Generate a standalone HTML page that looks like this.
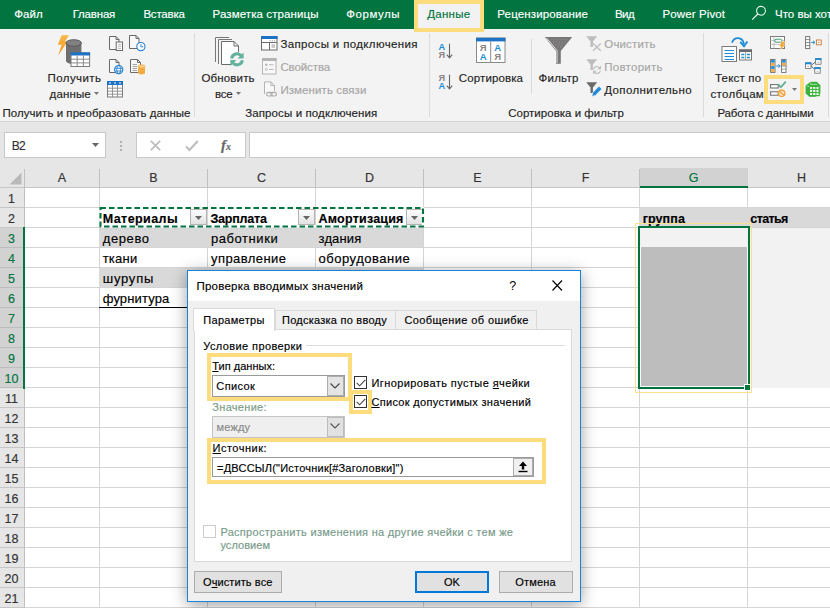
<!DOCTYPE html>
<html lang="ru"><head><meta charset="utf-8"><title>Проверка вводимых значений</title>
<style>
*{box-sizing:border-box;margin:0;padding:0}
html,body{width:830px;height:608px;overflow:hidden;background:#fff}
body{position:relative;font-family:"Liberation Sans","DejaVu Sans",sans-serif;font-size:12.5px;color:#262626}
.a{position:absolute}
.t{position:absolute;white-space:nowrap;line-height:16px;-webkit-text-stroke:0.16px currentColor}
svg{position:absolute;overflow:visible}
u{text-decoration:underline;text-underline-offset:1px}

</style></head><body>
<div class="a" style="left:0px;top:0px;width:830px;height:29px;background:#017440"></div>
<span class="t" style="left:14.30px;top:7px;line-height:14px;font-size:11.5px;color:#ffffff;letter-spacing:0.017px;">Файл</span>
<span class="t" style="left:72.70px;top:7px;line-height:14px;font-size:11.5px;color:#ffffff;letter-spacing:-0.192px;">Главная</span>
<span class="t" style="left:143.40px;top:7px;line-height:14px;font-size:11.5px;color:#ffffff;letter-spacing:-0.192px;">Вставка</span>
<span class="t" style="left:212.50px;top:7px;line-height:14px;font-size:11.5px;color:#ffffff;letter-spacing:0.109px;">Разметка страницы</span>
<span class="t" style="left:346.30px;top:7px;line-height:14px;font-size:11.5px;color:#ffffff;letter-spacing:0.525px;">Формулы</span>
<span class="t" style="left:497.30px;top:7px;line-height:14px;font-size:11.5px;color:#ffffff;letter-spacing:0.146px;">Рецензирование</span>
<span class="t" style="left:615.00px;top:7px;line-height:14px;font-size:11.5px;color:#ffffff;letter-spacing:-0.550px;">Вид</span>
<span class="t" style="left:662.50px;top:7px;line-height:14px;font-size:11.5px;color:#ffffff;letter-spacing:0.115px;">Power Pivot</span>
<span class="t" style="left:775.00px;top:7px;line-height:14px;font-size:11.5px;color:#ffffff;letter-spacing:0.000px;">Что вы хот</span>
<svg style="left:751px;top:5px" width="16" height="16" viewBox="0 0 16 16"><circle cx="10" cy="5.8" r="4.4" fill="none" stroke="#eef5f0" stroke-width="1.1"/><path d="M6.8 9 L1.2 14.6" stroke="#eef5f0" stroke-width="1.2" fill="none"/></svg>
<div class="a" style="left:0px;top:29px;width:830px;height:92px;background:#f3f3f3"></div>
<div class="a" style="left:0px;top:121px;width:830px;height:1px;background:#d2d2d2"></div>
<div class="a" style="left:414px;top:0px;width:70px;height:32px;background:#f2f2f2;border:4px solid #fddc7e"></div>
<span class="t" style="left:427.20px;top:7px;line-height:14px;font-size:11.5px;color:#017440;letter-spacing:0.290px;">Данные</span>
<div class="a" style="left:194px;top:33px;width:1px;height:84px;background:#dadada"></div>
<div class="a" style="left:429px;top:33px;width:1px;height:84px;background:#dadada"></div>
<div class="a" style="left:703px;top:33px;width:1px;height:84px;background:#dadada"></div>
<div class="a" style="left:828px;top:33px;width:1px;height:84px;background:#dadada"></div>
<div class="a" style="left:531px;top:39px;width:1px;height:55px;background:#dadada"></div>
<span class="t" style="left:47.60px;top:71px;line-height:14px;font-size:11.5px;color:#1f1f1f;letter-spacing:0.407px;">Получить</span>
<span class="t" style="left:49.60px;top:87px;line-height:14px;font-size:11.5px;color:#1f1f1f;letter-spacing:0.130px;">данные</span>
<span class="t" style="left:2.50px;top:106px;line-height:14px;font-size:11.5px;color:#1f1f1f;letter-spacing:0.047px;">Получить и преобразовать данные</span>
<span class="t" style="left:201.40px;top:71px;line-height:14px;font-size:11.5px;color:#1f1f1f;letter-spacing:0.164px;">Обновить</span>
<span class="t" style="left:215.00px;top:87px;line-height:14px;font-size:11.5px;color:#1f1f1f;letter-spacing:-0.225px;">все</span>
<span class="t" style="left:280.40px;top:37px;line-height:14px;font-size:11.5px;color:#1f1f1f;letter-spacing:0.360px;">Запросы и подключения</span>
<span class="t" style="left:280.40px;top:60px;line-height:14px;font-size:11.5px;color:#a6a6a6;letter-spacing:-0.100px;">Свойства</span>
<span class="t" style="left:280.40px;top:83px;line-height:14px;font-size:11.5px;color:#a6a6a6;letter-spacing:0.092px;">Изменить связи</span>
<span class="t" style="left:245.20px;top:106px;line-height:14px;font-size:11.5px;color:#1f1f1f;letter-spacing:0.110px;">Запросы и подключения</span>
<span class="t" style="left:458.80px;top:71px;line-height:14px;font-size:11.5px;color:#1f1f1f;letter-spacing:0.122px;">Сортировка</span>
<span class="t" style="left:538.50px;top:71px;line-height:14px;font-size:11.5px;color:#1f1f1f;letter-spacing:0.230px;">Фильтр</span>
<span class="t" style="left:604.30px;top:37px;line-height:14px;font-size:11.5px;color:#a6a6a6;letter-spacing:0.150px;">Очистить</span>
<span class="t" style="left:604.30px;top:60px;line-height:14px;font-size:11.5px;color:#a6a6a6;letter-spacing:0.256px;">Повторить</span>
<span class="t" style="left:604.30px;top:83px;line-height:14px;font-size:11.5px;color:#1f1f1f;letter-spacing:0.379px;">Дополнительно</span>
<span class="t" style="left:508.20px;top:106px;line-height:14px;font-size:11.5px;color:#1f1f1f;letter-spacing:0.017px;">Сортировка и фильтр</span>
<span class="t" style="left:715.00px;top:71px;line-height:14px;font-size:11.5px;color:#1f1f1f;letter-spacing:0.179px;">Текст по</span>
<span class="t" style="left:710.60px;top:87px;line-height:14px;font-size:11.5px;color:#1f1f1f;letter-spacing:0.271px;">столбцам</span>
<span class="t" style="left:717.40px;top:106px;line-height:14px;font-size:11.5px;color:#1f1f1f;letter-spacing:-0.153px;">Работа с данными</span>
<svg style="left:94px;top:92px" width="5" height="3" viewBox="0 0 5 3"><path d="M0 0H5L2.5 3Z" fill="#777"/></svg>
<svg style="left:236.3px;top:92px" width="5" height="3" viewBox="0 0 5 3"><path d="M0 0H5L2.5 3Z" fill="#777"/></svg>
<svg style="left:792px;top:88px" width="5" height="3" viewBox="0 0 5 3"><path d="M0 0H5L2.5 3Z" fill="#777"/></svg>
<div class="a" style="left:764px;top:75px;width:40px;height:29px;border:4px solid #fddc7e"></div>
<svg style="left:57px;top:34px" width="36" height="34" viewBox="0 0 36 34"><defs><linearGradient id="lg1" x1="0" y1="0" x2="0" y2="1"><stop offset="0" stop-color="#f8b84a"/><stop offset="1" stop-color="#f09a1e"/></linearGradient></defs><path d="M4.6 1.2H12L8 7.6H10.6L1.2 21.4L4.6 10.8H0.8Z" fill="url(#lg1)"/><path d="M9 9V26.5C9 28.5 12 30 16.5 30S24.4 28.5 24.4 26.5V9Z" fill="#6e6e6e"/><ellipse cx="16.7" cy="9" rx="7.7" ry="3.3" fill="#808080" stroke="#5a5a5a" stroke-width="1"/><rect x="14" y="19" width="18.6" height="13.5" fill="#fff" stroke="#7a7a7a" stroke-width="1"/><rect x="13.5" y="18.3" width="19.6" height="3.2" fill="#1e72c4"/><path d="M14 25.2H32.6M14 28.9H32.6M20.2 21.5V32.5M26.4 21.5V32.5" stroke="#8a8a8a" stroke-width="1" fill="none"/></svg>
<svg style="left:109px;top:36px" width="15" height="16" viewBox="0 0 15 16"><path d="M0.5 0.5H7L10 3.5V13.5H0.5Z" fill="#f8f8f8" stroke="#6a6a6a" stroke-width="1"/><path d="M7 0.5V3.5H10" fill="none" stroke="#6a6a6a" stroke-width="1"/><rect x="7.2" y="6" width="6.3" height="8.5" fill="#fff" stroke="#6a6a6a" stroke-width="1"/><path d="M9 8.4H12M9 10.4H12M9 12.4H12" stroke="#9a9a9a" stroke-width="0.7"/></svg>
<svg style="left:129px;top:35px" width="17" height="17" viewBox="0 0 17 17"><path d="M0.5 0.5H7L10 3.5V13.5H0.5Z" fill="#f8f8f8" stroke="#6a6a6a" stroke-width="1"/><path d="M7 0.5V3.5H10" fill="none" stroke="#6a6a6a" stroke-width="1"/><circle cx="11.9" cy="11.6" r="4.1" fill="#fff" stroke="#2580d0" stroke-width="1.1"/><path d="M11.9 9.2V11.8H14.2" stroke="#2580d0" stroke-width="1" fill="none"/></svg>
<svg style="left:109px;top:59px" width="16" height="17" viewBox="0 0 16 17"><path d="M0.5 0.5H7L10 3.5V13.5H0.5Z" fill="#f8f8f8" stroke="#6a6a6a" stroke-width="1"/><path d="M7 0.5V3.5H10" fill="none" stroke="#6a6a6a" stroke-width="1"/><circle cx="9.7" cy="10.6" r="4.1" fill="#fff" stroke="#2580d0" stroke-width="1.2"/><path d="M6.2 9.3H13.2M6.2 12H13.2" stroke="#2580d0" stroke-width="0.9" fill="none"/><ellipse cx="9.7" cy="10.6" rx="1.9" ry="4" fill="none" stroke="#2580d0" stroke-width="0.9"/></svg>
<svg style="left:130px;top:59px" width="16" height="17" viewBox="0 0 16 17"><path d="M0.5 0.5H7.5L10.5 3.5V13.5H0.5Z" fill="#f8f8f8" stroke="#6a6a6a" stroke-width="1"/><path d="M7.5 0.5V3.5H10.5" fill="none" stroke="#6a6a6a" stroke-width="1"/><path d="M2.6 5.5H7M2.6 7.5H7.4M2.6 9.5H7M2.6 11.5H7" stroke="#8a8a8a" stroke-width="0.8"/><path d="M8 7.4V13.8C8 14.8 9.5 15.5 11.5 15.5S15 14.8 15 13.8V7.4Z" fill="#f3ab45"/><ellipse cx="11.5" cy="7.4" rx="3.5" ry="1.7" fill="#f9cc85" stroke="#f0a235" stroke-width="0.6"/></svg>
<svg style="left:107px;top:81px" width="17" height="17" viewBox="0 0 17 17"><rect x="0.5" y="0.5" width="15" height="15.5" fill="#fff" stroke="#7a7a7a" stroke-width="1"/><rect x="0" y="0" width="16" height="4" fill="#1e72c4"/><path d="M2 2H4M7 2H9M12 2H14" stroke="#fff" stroke-width="1"/><path d="M0.5 7.2H15.5M0.5 10.2H15.5M0.5 13.2H15.5M5.5 4V16M10.5 4V16" stroke="#8a8a8a" stroke-width="0.9" fill="none"/></svg>
<svg style="left:214px;top:36px" width="32" height="32" viewBox="0 0 32 32"><path d="M1.5 26V1.5H15" fill="none" stroke="#777" stroke-width="1"/><path d="M4.5 28V3.5H18" fill="none" stroke="#777" stroke-width="1"/><path d="M7.5 5.5H20L24.5 10V28.5H7.5Z" fill="#fff" stroke="#6a6a6a" stroke-width="1"/><path d="M20 5.5V10H24.5" fill="none" stroke="#6a6a6a" stroke-width="1"/><circle cx="23" cy="23.3" r="7.6" fill="#f3f3f3"/><path d="M17.6 22.4A5.5 5.5 0 0 1 27.3 19.8" fill="none" stroke="#63b39c" stroke-width="3"/><path d="M29.6 16.6V22.6H23.6Z" fill="#63b39c"/><path d="M28.4 24.2A5.5 5.5 0 0 1 18.7 26.8" fill="none" stroke="#63b39c" stroke-width="3"/><path d="M16.4 30V24H22.4Z" fill="#63b39c"/></svg>
<svg style="left:261px;top:36px" width="17" height="15" viewBox="0 0 17 15"><rect x="0.5" y="0.5" width="15.5" height="13.5" fill="#fff" stroke="#6a6a6a" stroke-width="1"/><rect x="0" y="0" width="16.5" height="3" fill="#1e72c4"/><path d="M0.5 6.5H16M8.5 6.5V14" stroke="#6a6a6a" stroke-width="1" fill="none"/><path d="M10.5 9H14M10.5 11H14" stroke="#8a8a8a" stroke-width="0.9"/><path d="M8.6 4.8H9.6M10.8 4.8H11.8M13 4.8H14" stroke="#8a8a8a" stroke-width="0.9"/></svg>
<svg style="left:262px;top:58px" width="15" height="17" viewBox="0 0 15 17"><rect x="0.5" y="0.5" width="13.5" height="15.5" fill="#f8f8f8" stroke="#b4b4b4" stroke-width="1"/><rect x="0" y="0" width="14.5" height="3" fill="#b4b4b4"/><circle cx="4.3" cy="6.8" r="1.2" fill="#b4b4b4"/><circle cx="4.3" cy="11.4" r="1.1" fill="none" stroke="#b4b4b4" stroke-width="0.8"/><path d="M7 6.8H11.5M7 11.4H11.5" stroke="#b4b4b4" stroke-width="1"/></svg>
<svg style="left:264px;top:81px" width="15" height="17" viewBox="0 0 15 17"><path d="M0.5 13V0.9H6.8L10.5 4.6V10" fill="#f8f8f8" stroke="#b4b4b4" stroke-width="1"/><path d="M6.8 0.9V4.6H10.5" fill="none" stroke="#b4b4b4" stroke-width="1"/><rect x="2.6" y="11.4" width="5.6" height="3.6" rx="1.8" fill="none" stroke="#a8a8a8" stroke-width="1.1"/><rect x="6.8" y="11.4" width="5.6" height="3.6" rx="1.8" fill="none" stroke="#a8a8a8" stroke-width="1.1"/></svg>
<svg style="left:438px;top:43px" width="16" height="17" viewBox="0 0 16 17"><text x="0.4" y="6.8" font-family="Liberation Sans, sans-serif" font-size="9.2" font-weight="bold" fill="#1e8bd8">A</text><text x="0.4" y="15" font-family="Liberation Sans, sans-serif" font-size="9.2" font-weight="bold" fill="#8c8484">Я</text><path d="M11.5 0.8V14.6M8.8 11.6L11.5 14.8L14.2 11.6" fill="none" stroke="#666" stroke-width="1.1"/></svg>
<svg style="left:438px;top:74px" width="16" height="17" viewBox="0 0 16 17"><text x="0.4" y="6.8" font-family="Liberation Sans, sans-serif" font-size="9.2" font-weight="bold" fill="#8c8484">Я</text><text x="0.4" y="15" font-family="Liberation Sans, sans-serif" font-size="9.2" font-weight="bold" fill="#1e8bd8">A</text><path d="M11.5 0.8V14.6M8.8 11.6L11.5 14.8L14.2 11.6" fill="none" stroke="#666" stroke-width="1.1"/></svg>
<svg style="left:476px;top:37px" width="30" height="27" viewBox="0 0 30 27"><rect x="0.5" y="1" width="28.5" height="24.5" fill="#fff" stroke="#8a8a8a" stroke-width="1"/><rect x="0" y="0.8" width="29.5" height="3.6" fill="#1e72c4"/><path d="M14.7 4.4V25.5" stroke="#8a8a8a" stroke-width="1"/><text x="3.8" y="13.6" font-family="Liberation Sans, sans-serif" font-size="9.5" font-weight="bold" fill="#8c8484">Я</text><text x="3.8" y="23.2" font-family="Liberation Sans, sans-serif" font-size="9.5" font-weight="bold" fill="#1e8bd8">A</text><text x="18.3" y="13.6" font-family="Liberation Sans, sans-serif" font-size="9.5" font-weight="bold" fill="#1e8bd8">A</text><text x="18.3" y="23.2" font-family="Liberation Sans, sans-serif" font-size="9.5" font-weight="bold" fill="#8c8484">Я</text></svg>
<svg style="left:544px;top:36px" width="30" height="29" viewBox="0 0 30 29"><path d="M0.8 1H28.2L16.8 15V27.8H12V15Z" fill="#777"/><path d="M2.6 2L13 14.6V27" fill="none" stroke="#f3f3f3" stroke-width="0.9"/><g fill="#c9a9b0"><circle cx="8" cy="3.6" r="0.45"/><circle cx="11" cy="3.6" r="0.45"/><circle cx="14" cy="3.6" r="0.45"/><circle cx="17" cy="3.6" r="0.45"/><circle cx="20" cy="3.6" r="0.45"/><circle cx="23" cy="3.6" r="0.45"/><circle cx="9.5" cy="6" r="0.45"/><circle cx="12.5" cy="6" r="0.45"/><circle cx="15.5" cy="6" r="0.45"/><circle cx="18.5" cy="6" r="0.45"/><circle cx="21.5" cy="6" r="0.45"/><circle cx="12" cy="8.4" r="0.45"/><circle cx="15" cy="8.4" r="0.45"/><circle cx="18" cy="8.4" r="0.45"/><circle cx="14" cy="10.8" r="0.45"/><circle cx="16.5" cy="10.8" r="0.45"/></g></svg>
<svg style="left:586px;top:36px" width="16" height="16" viewBox="0 0 16 16"><path d="M0.2 0.3H11.2L6.9 5.6V11H4.5V5.6Z" fill="#bdbdbd"/><path d="M7 7.6L14.8 14.8M14.8 7.6L7 14.8" stroke="#bdbdbd" stroke-width="1.3" fill="none"/></svg>
<svg style="left:586px;top:58.5px" width="16" height="17" viewBox="0 0 16 17"><path d="M0.2 0.3H11.2L6.9 5.6V11H4.5V5.6Z" fill="#bdbdbd"/><path d="M7.6 10.4A3.4 3.4 0 0 1 13.6 8.8" fill="none" stroke="#bdbdbd" stroke-width="1.2"/><path d="M15 6.6V10.2H11.4Z" fill="#bdbdbd"/><path d="M14.4 11.6A3.4 3.4 0 0 1 8.4 13.2" fill="none" stroke="#bdbdbd" stroke-width="1.2"/><path d="M7 15.4V11.8H10.6Z" fill="#bdbdbd"/></svg>
<svg style="left:586px;top:81.5px" width="16" height="16" viewBox="0 0 16 16"><path d="M0.2 0.3H11.2L6.9 5.6V11H4.5V5.6Z" fill="#6a6a6a"/><path d="M13 4.2L15.8 7L9.4 13.4L5.8 14.6L6.8 10.6Z" fill="#1e8bd8" stroke="#f3f3f3" stroke-width="0.7"/></svg>
<svg style="left:721px;top:35px" width="33" height="28" viewBox="0 0 33 28"><rect x="1" y="11.5" width="14.5" height="15" fill="#fff" stroke="#7a7a7a" stroke-width="1"/><path d="M3.5 15.5H13M3.5 18.5H13M3.5 21.5H13M3.5 24.5H13" stroke="#1e8bd8" stroke-width="1"/><rect x="18.5" y="15" width="12" height="10" fill="#fff" stroke="#7a7a7a" stroke-width="1"/><rect x="18" y="14.4" width="13" height="2.6" fill="#6a6a6a"/><path d="M20.3 19.5H23.4M25.8 19.5H29M20.3 22.5H23.4M25.8 22.5H29" stroke="#1e8bd8" stroke-width="1.4"/><path d="M24.6 17V25" stroke="#8a8a8a" stroke-width="0.8"/><path d="M11 7.6C13 1.6 21.4 1 23 9" fill="none" stroke="#1e8bd8" stroke-width="1.8"/><path d="M19.2 6.8L23 11.2L26.4 6.4" fill="none" stroke="#1e8bd8" stroke-width="1.8"/></svg>
<svg style="left:770px;top:36px" width="17" height="16" viewBox="0 0 17 16"><rect x="0.5" y="0.5" width="14" height="12" fill="#fff" stroke="#7a7a7a" stroke-width="1"/><path d="M0.5 4.4H14.5M0.5 8.4H14.5M4 0.5V12.5" stroke="#b0b0b0" stroke-width="0.8"/><rect x="4.8" y="3.2" width="7" height="3" rx="1.2" fill="#fff" stroke="#3a9a6a" stroke-width="1"/><path d="M11.4 5.6H15.8L13.6 9H15.6L9.2 14.8L11.2 10.4H9.2Z" fill="#f4a938" stroke="#f3f3f3" stroke-width="0.4"/></svg>
<svg style="left:770px;top:58px" width="17" height="16" viewBox="0 0 17 16"><rect x="0.6" y="1.4" width="4.4" height="13" fill="#fff" stroke="#6a6a6a" stroke-width="0.9"/><rect x="1.1" y="1.9" width="3.4" height="2.8" fill="#1e8bd8"/><rect x="1.1" y="5" width="3.4" height="2.8" fill="#f3a93c"/><rect x="1.1" y="8.1" width="3.4" height="2.8" fill="#1e8bd8"/><rect x="1.1" y="11.2" width="3.4" height="2.7" fill="#f3a93c"/><rect x="11.6" y="1.4" width="4.4" height="13" fill="#fff" stroke="#6a6a6a" stroke-width="0.9"/><rect x="12.1" y="1.9" width="3.4" height="2.8" fill="#1e8bd8"/><rect x="12.1" y="5" width="3.4" height="2.8" fill="#f3a93c"/><path d="M11.6 8.1H16M11.6 11.2H16" stroke="#8a8a8a" stroke-width="0.8"/><path d="M6.2 8H9.8M8.4 6.4L10.2 8L8.4 9.6" fill="none" stroke="#1e8bd8" stroke-width="1"/></svg>
<svg style="left:769px;top:80px" width="18" height="18" viewBox="0 0 18 18"><rect x="1.6" y="4.6" width="7.6" height="3.4" fill="#fff" stroke="#6a6a6a" stroke-width="1"/><rect x="1.6" y="11.8" width="7.6" height="3.4" fill="#fff" stroke="#6a6a6a" stroke-width="1"/><path d="M9.2 4.4L11.8 7.2L16.8 1.6" fill="none" stroke="#5fae93" stroke-width="1.7"/><circle cx="12.7" cy="13.3" r="3.2" fill="#fbe6c6" stroke="#ee9a2c" stroke-width="1.2"/><path d="M10.5 11.2L14.9 15.4" stroke="#ee9a2c" stroke-width="1.2"/></svg>
<svg style="left:805px;top:36px" width="17" height="14" viewBox="0 0 17 14"><rect x="0.6" y="0.6" width="4.2" height="12" fill="#fff" stroke="#6a6a6a" stroke-width="0.9"/><path d="M0.6 3.6H4.8M0.6 6.6H4.8M0.6 9.6H4.8" stroke="#6a6a6a" stroke-width="0.8"/><path d="M6.2 6.4H9.6M8.2 4.8L10 6.4L8.2 8" fill="none" stroke="#1e8bd8" stroke-width="1"/><rect x="11.4" y="4" width="4.8" height="4.8" fill="#fff" stroke="#c8742c" stroke-width="0.9"/><rect x="13.2" y="5.8" width="1.2" height="1.2" fill="#c8742c"/></svg>
<svg style="left:805px;top:58px" width="17" height="17" viewBox="0 0 17 17"><path d="M5.8 7.6L10.6 3.8M5.8 7.6L10 11.8" stroke="#6a6a6a" stroke-width="1" fill="none"/><rect x="0.6" y="4.8" width="5.4" height="5.6" fill="#fff" stroke="#6a6a6a" stroke-width="0.8"/><rect x="0.19999999999999996" y="4.3999999999999995" width="6.2" height="1.9" fill="#1e8bd8"/><path d="M2.4 8.4H4.2" stroke="#8a8a8a" stroke-width="0.7"/><rect x="10.6" y="0.6" width="5.4" height="5.6" fill="#fff" stroke="#6a6a6a" stroke-width="0.8"/><rect x="10.2" y="0.19999999999999996" width="6.2" height="1.9" fill="#1e8bd8"/><path d="M12.4 4.2H14.2" stroke="#8a8a8a" stroke-width="0.7"/><rect x="9.8" y="9.6" width="5.4" height="5.6" fill="#fff" stroke="#6a6a6a" stroke-width="0.8"/><rect x="9.4" y="9.2" width="6.2" height="1.9" fill="#1e8bd8"/><path d="M11.600000000000001 13.2H13.4" stroke="#8a8a8a" stroke-width="0.7"/></svg>
<svg style="left:805px;top:81px" width="17" height="17" viewBox="0 0 17 17"><path d="M0.6 4.4L5.6 0.8H11.8L15.4 4.2V12.4L10.4 15.8H4.4L0.6 12.6Z" fill="#3bb23b"/><path d="M4.4 5.4H14.2V14.6H4.4Z" fill="#fff" opacity="0.92"/><path d="M4.4 8.4H14.2M4.4 11.5H14.2M7.6 5.4V14.6M10.9 5.4V14.6" stroke="#3bb23b" stroke-width="1"/><path d="M4.4 5.4H14.2V14.6H4.4Z" fill="none" stroke="#3bb23b" stroke-width="1.2"/><path d="M1.4 4.8L4.4 5.6M5.8 1.4V3.4H12" stroke="#c8ecc8" stroke-width="0.7" fill="none"/></svg>
<div class="a" style="left:0px;top:122px;width:830px;height:46px;background:#e6e6e6"></div>
<div class="a" style="left:4px;top:132px;width:102px;height:26px;background:#fff;border:1px solid #c8c8c8"></div>
<div class="a" style="left:136px;top:132px;width:110px;height:26px;background:#fff;border:1px solid #c8c8c8"></div>
<div class="a" style="left:249px;top:132px;width:590px;height:26px;background:#fff;border:1px solid #c8c8c8"></div>
<span class="t" style="left:11.80px;top:138px;line-height:16px;font-size:12px;color:#333;letter-spacing:-0.700px;">B2</span>
<svg style="left:92px;top:142.5px" width="7" height="4" viewBox="0 0 7 4"><path d="M0 0H7L3.5 4Z" fill="#666"/></svg>
<div class="a" style="left:120px;top:141px;width:2px;height:2px;background:#b0b0b0"></div>
<div class="a" style="left:120px;top:145px;width:2px;height:2px;background:#b0b0b0"></div>
<div class="a" style="left:120px;top:149px;width:2px;height:2px;background:#b0b0b0"></div>
<svg style="left:149.5px;top:140px" width="11" height="11" viewBox="0 0 11 11"><path d="M0.8 0.8L10.2 10.2M10.2 0.8L0.8 10.2" stroke="#bcbcbc" stroke-width="1.7" fill="none"/></svg>
<svg style="left:185px;top:140px" width="14" height="11" viewBox="0 0 14 11"><path d="M1 6.5L4.5 10L12.8 1" stroke="#bcbcbc" stroke-width="2" fill="none"/></svg>
<span class="t" style="left:221px;top:136px;font-family:'Liberation Serif',serif;font-style:italic;font-size:15px;line-height:18px;color:#666;font-weight:bold">f<span style="font-size:10px;font-weight:bold">x</span></span>
<div class="a" style="left:0px;top:168px;width:830px;height:20px;background:#e6e6e6"></div>
<div class="a" style="left:0px;top:168px;width:24px;height:440px;background:#e6e6e6"></div>
<div class="a" style="left:0px;top:228px;width:24px;height:160px;background:#d2d2d2"></div>
<div class="a" style="left:0px;top:187px;width:639px;height:1px;background:#c6c6c6"></div>
<div class="a" style="left:748px;top:187px;width:82px;height:1px;background:#c6c6c6"></div>
<div class="a" style="left:24px;top:207px;width:806px;height:1px;background:#d4d4d4"></div>
<div class="a" style="left:0px;top:207px;width:24px;height:1px;background:#c6c6c6"></div>
<div class="a" style="left:24px;top:227px;width:806px;height:1px;background:#d4d4d4"></div>
<div class="a" style="left:0px;top:227px;width:24px;height:1px;background:#c6c6c6"></div>
<div class="a" style="left:24px;top:247px;width:806px;height:1px;background:#d4d4d4"></div>
<div class="a" style="left:0px;top:247px;width:23px;height:1px;background:#bdbdbd"></div>
<div class="a" style="left:24px;top:267px;width:806px;height:1px;background:#d4d4d4"></div>
<div class="a" style="left:0px;top:267px;width:23px;height:1px;background:#bdbdbd"></div>
<div class="a" style="left:24px;top:287px;width:806px;height:1px;background:#d4d4d4"></div>
<div class="a" style="left:0px;top:287px;width:23px;height:1px;background:#bdbdbd"></div>
<div class="a" style="left:24px;top:307px;width:806px;height:1px;background:#d4d4d4"></div>
<div class="a" style="left:0px;top:307px;width:23px;height:1px;background:#bdbdbd"></div>
<div class="a" style="left:24px;top:327px;width:806px;height:1px;background:#d4d4d4"></div>
<div class="a" style="left:0px;top:327px;width:23px;height:1px;background:#bdbdbd"></div>
<div class="a" style="left:24px;top:347px;width:806px;height:1px;background:#d4d4d4"></div>
<div class="a" style="left:0px;top:347px;width:23px;height:1px;background:#bdbdbd"></div>
<div class="a" style="left:24px;top:367px;width:806px;height:1px;background:#d4d4d4"></div>
<div class="a" style="left:0px;top:367px;width:23px;height:1px;background:#bdbdbd"></div>
<div class="a" style="left:24px;top:387px;width:806px;height:1px;background:#d4d4d4"></div>
<div class="a" style="left:0px;top:387px;width:23px;height:1px;background:#bdbdbd"></div>
<div class="a" style="left:24px;top:407px;width:806px;height:1px;background:#d4d4d4"></div>
<div class="a" style="left:0px;top:407px;width:24px;height:1px;background:#c6c6c6"></div>
<div class="a" style="left:24px;top:427px;width:806px;height:1px;background:#d4d4d4"></div>
<div class="a" style="left:0px;top:427px;width:24px;height:1px;background:#c6c6c6"></div>
<div class="a" style="left:24px;top:447px;width:806px;height:1px;background:#d4d4d4"></div>
<div class="a" style="left:0px;top:447px;width:24px;height:1px;background:#c6c6c6"></div>
<div class="a" style="left:24px;top:467px;width:806px;height:1px;background:#d4d4d4"></div>
<div class="a" style="left:0px;top:467px;width:24px;height:1px;background:#c6c6c6"></div>
<div class="a" style="left:24px;top:487px;width:806px;height:1px;background:#d4d4d4"></div>
<div class="a" style="left:0px;top:487px;width:24px;height:1px;background:#c6c6c6"></div>
<div class="a" style="left:24px;top:507px;width:806px;height:1px;background:#d4d4d4"></div>
<div class="a" style="left:0px;top:507px;width:24px;height:1px;background:#c6c6c6"></div>
<div class="a" style="left:24px;top:527px;width:806px;height:1px;background:#d4d4d4"></div>
<div class="a" style="left:0px;top:527px;width:24px;height:1px;background:#c6c6c6"></div>
<div class="a" style="left:24px;top:547px;width:806px;height:1px;background:#d4d4d4"></div>
<div class="a" style="left:0px;top:547px;width:24px;height:1px;background:#c6c6c6"></div>
<div class="a" style="left:24px;top:567px;width:806px;height:1px;background:#d4d4d4"></div>
<div class="a" style="left:0px;top:567px;width:24px;height:1px;background:#c6c6c6"></div>
<div class="a" style="left:24px;top:587px;width:806px;height:1px;background:#d4d4d4"></div>
<div class="a" style="left:0px;top:587px;width:24px;height:1px;background:#c6c6c6"></div>
<div class="a" style="left:24px;top:607px;width:806px;height:1px;background:#d4d4d4"></div>
<div class="a" style="left:0px;top:607px;width:24px;height:1px;background:#c6c6c6"></div>
<div class="a" style="left:24px;top:188px;width:1px;height:420px;background:#c0c0c0"></div>
<div class="a" style="left:24px;top:169px;width:1px;height:19px;background:#c0c0c0"></div>
<div class="a" style="left:99px;top:188px;width:1px;height:420px;background:#d4d4d4"></div>
<div class="a" style="left:99px;top:169px;width:1px;height:19px;background:#c0c0c0"></div>
<div class="a" style="left:207px;top:188px;width:1px;height:420px;background:#d4d4d4"></div>
<div class="a" style="left:207px;top:169px;width:1px;height:19px;background:#c0c0c0"></div>
<div class="a" style="left:315px;top:188px;width:1px;height:420px;background:#d4d4d4"></div>
<div class="a" style="left:315px;top:169px;width:1px;height:19px;background:#c0c0c0"></div>
<div class="a" style="left:423px;top:188px;width:1px;height:420px;background:#d4d4d4"></div>
<div class="a" style="left:423px;top:169px;width:1px;height:19px;background:#c0c0c0"></div>
<div class="a" style="left:531px;top:188px;width:1px;height:420px;background:#d4d4d4"></div>
<div class="a" style="left:531px;top:169px;width:1px;height:19px;background:#c0c0c0"></div>
<div class="a" style="left:639px;top:188px;width:1px;height:420px;background:#d4d4d4"></div>
<div class="a" style="left:639px;top:169px;width:1px;height:19px;background:#c0c0c0"></div>
<div class="a" style="left:747px;top:188px;width:1px;height:420px;background:#d4d4d4"></div>
<div class="a" style="left:747px;top:169px;width:1px;height:19px;background:#c0c0c0"></div>
<div class="a" style="left:640px;top:168px;width:108px;height:20px;background:#d2d2d2"></div>
<div class="a" style="left:640px;top:186px;width:108px;height:2px;background:#017440"></div>
<div class="a" style="left:23px;top:227px;width:2px;height:162px;background:#017440"></div>
<svg style="left:9px;top:172px" width="13" height="13" viewBox="0 0 13 13"><path d="M12.5 0.5V12.5H0.5Z" fill="#b9b9b9"/></svg>
<span class="t" style="left:57.83px;top:170px;line-height:16px;font-size:12.5px;color:#333;letter-spacing:0.000px;">A</span>
<span class="t" style="left:149.32px;top:170px;line-height:16px;font-size:12.5px;color:#333;letter-spacing:0.000px;">B</span>
<span class="t" style="left:256.98px;top:170px;line-height:16px;font-size:12.5px;color:#333;letter-spacing:0.000px;">C</span>
<span class="t" style="left:364.98px;top:170px;line-height:16px;font-size:12.5px;color:#333;letter-spacing:0.000px;">D</span>
<span class="t" style="left:473.32px;top:170px;line-height:16px;font-size:12.5px;color:#333;letter-spacing:0.000px;">E</span>
<span class="t" style="left:581.67px;top:170px;line-height:16px;font-size:12.5px;color:#333;letter-spacing:0.000px;">F</span>
<span class="t" style="left:688.65px;top:170px;line-height:16px;font-size:12.5px;color:#017440;letter-spacing:0.000px;">G</span>
<span class="t" style="left:796.98px;top:170px;line-height:16px;font-size:12.5px;color:#333;letter-spacing:0.000px;">H</span>
<span class="t" style="left:8.03px;top:191px;line-height:16px;font-size:12.5px;color:#333;letter-spacing:0.000px;">1</span>
<span class="t" style="left:8.03px;top:211px;line-height:16px;font-size:12.5px;color:#333;letter-spacing:0.000px;">2</span>
<span class="t" style="left:8.03px;top:231px;line-height:16px;font-size:12.5px;color:#017440;letter-spacing:0.000px;">3</span>
<span class="t" style="left:8.03px;top:251px;line-height:16px;font-size:12.5px;color:#017440;letter-spacing:0.000px;">4</span>
<span class="t" style="left:8.03px;top:271px;line-height:16px;font-size:12.5px;color:#017440;letter-spacing:0.000px;">5</span>
<span class="t" style="left:8.03px;top:291px;line-height:16px;font-size:12.5px;color:#017440;letter-spacing:0.000px;">6</span>
<span class="t" style="left:8.03px;top:311px;line-height:16px;font-size:12.5px;color:#017440;letter-spacing:0.000px;">7</span>
<span class="t" style="left:8.03px;top:331px;line-height:16px;font-size:12.5px;color:#017440;letter-spacing:0.000px;">8</span>
<span class="t" style="left:8.03px;top:351px;line-height:16px;font-size:12.5px;color:#017440;letter-spacing:0.000px;">9</span>
<span class="t" style="left:4.55px;top:371px;line-height:16px;font-size:12.5px;color:#017440;letter-spacing:0.000px;">10</span>
<span class="t" style="left:5.00px;top:391px;line-height:16px;font-size:12.5px;color:#333;letter-spacing:0.000px;">11</span>
<span class="t" style="left:4.55px;top:411px;line-height:16px;font-size:12.5px;color:#333;letter-spacing:0.000px;">12</span>
<span class="t" style="left:4.55px;top:431px;line-height:16px;font-size:12.5px;color:#333;letter-spacing:0.000px;">13</span>
<span class="t" style="left:4.55px;top:451px;line-height:16px;font-size:12.5px;color:#333;letter-spacing:0.000px;">14</span>
<span class="t" style="left:4.55px;top:471px;line-height:16px;font-size:12.5px;color:#333;letter-spacing:0.000px;">15</span>
<span class="t" style="left:4.55px;top:491px;line-height:16px;font-size:12.5px;color:#333;letter-spacing:0.000px;">16</span>
<span class="t" style="left:4.55px;top:511px;line-height:16px;font-size:12.5px;color:#333;letter-spacing:0.000px;">17</span>
<span class="t" style="left:4.55px;top:531px;line-height:16px;font-size:12.5px;color:#333;letter-spacing:0.000px;">18</span>
<span class="t" style="left:4.55px;top:551px;line-height:16px;font-size:12.5px;color:#333;letter-spacing:0.000px;">19</span>
<span class="t" style="left:4.55px;top:571px;line-height:16px;font-size:12.5px;color:#333;letter-spacing:0.000px;">20</span>
<span class="t" style="left:4.55px;top:591px;line-height:16px;font-size:12.5px;color:#333;letter-spacing:0.000px;">21</span>
<div class="a" style="left:99px;top:228px;width:324px;height:19px;background:#d9d9d9"></div>
<div class="a" style="left:99px;top:268px;width:324px;height:19px;background:#d9d9d9"></div>
<div class="a" style="left:99px;top:307px;width:325px;height:1px;background:#000"></div>
<div class="a" style="left:639px;top:208px;width:191px;height:19px;background:#d9d9d9"></div>
<div class="a" style="left:748px;top:228px;width:82px;height:160px;background:#f2f2f2"></div>
<span class="t" style="left:102.70px;top:211px;line-height:16px;font-size:12.5px;color:#000;letter-spacing:0.437px;font-weight:bold;">Материалы</span>
<span class="t" style="left:210.50px;top:211px;line-height:16px;font-size:12.5px;color:#000;letter-spacing:-0.221px;font-weight:bold;">Зарплата</span>
<span class="t" style="left:318.60px;top:211px;line-height:16px;font-size:12.5px;color:#000;letter-spacing:0.210px;font-weight:bold;">Амортизация</span>
<span class="t" style="left:102.70px;top:230px;line-height:17px;font-size:13px;color:#000;letter-spacing:0.610px;">дерево</span>
<span class="t" style="left:211.00px;top:230px;line-height:17px;font-size:13px;color:#000;letter-spacing:0.562px;">работники</span>
<span class="t" style="left:318.60px;top:230px;line-height:17px;font-size:13px;color:#000;letter-spacing:0.130px;">здания</span>
<span class="t" style="left:102.70px;top:250px;line-height:17px;font-size:13px;color:#000;letter-spacing:0.225px;">ткани</span>
<span class="t" style="left:211.00px;top:250px;line-height:17px;font-size:13px;color:#000;letter-spacing:0.433px;">управление</span>
<span class="t" style="left:318.60px;top:250px;line-height:17px;font-size:13px;color:#000;letter-spacing:0.505px;">оборудование</span>
<span class="t" style="left:102.70px;top:270px;line-height:17px;font-size:13px;color:#000;letter-spacing:0.770px;">шурупы</span>
<span class="t" style="left:102.70px;top:290px;line-height:17px;font-size:13px;color:#000;letter-spacing:0.138px;">фурнитура</span>
<span class="t" style="left:642.70px;top:211px;line-height:16px;font-size:12.5px;color:#000;letter-spacing:0.100px;font-weight:bold;">группа</span>
<span class="t" style="left:750.30px;top:211px;line-height:16px;font-size:12.5px;color:#000;letter-spacing:-0.610px;font-weight:bold;">статья</span>
<div class="a" style="left:190px;top:209px;width:17px;height:16px;background:linear-gradient(#fdfdfd,#e2e2e2);border:1px solid #b4b4b4"></div>
<svg style="left:195px;top:216px" width="7" height="4" viewBox="0 0 7 4"><path d="M0 0H7L3.5 4Z" fill="#666"/></svg>
<div class="a" style="left:298px;top:209px;width:17px;height:16px;background:linear-gradient(#fdfdfd,#e2e2e2);border:1px solid #b4b4b4"></div>
<svg style="left:303px;top:216px" width="7" height="4" viewBox="0 0 7 4"><path d="M0 0H7L3.5 4Z" fill="#666"/></svg>
<div class="a" style="left:406px;top:209px;width:17px;height:16px;background:linear-gradient(#fdfdfd,#e2e2e2);border:1px solid #b4b4b4"></div>
<svg style="left:411px;top:216px" width="7" height="4" viewBox="0 0 7 4"><path d="M0 0H7L3.5 4Z" fill="#666"/></svg>
<svg style="left:98px;top:206px" width="328" height="23"><rect x="2.5" y="2" width="322.5" height="18.5" fill="none" stroke="#fff" stroke-width="2.1"/><rect x="2.5" y="2" width="322.5" height="18.5" fill="none" stroke="#017440" stroke-width="2.1" stroke-dasharray="5.5 3"/></svg>
<div class="a" style="left:635px;top:223px;width:117px;height:170px;border:1px solid #fde08c"></div>
<div class="a" style="left:640px;top:228px;width:108px;height:19px;background:#f2f2f2"></div>
<div class="a" style="left:640px;top:247px;width:108px;height:140px;background:#bdbdbd;border:1px solid #fff;border-top:0"></div>
<div class="a" style="left:638px;top:226px;width:112px;height:163px;border:2px solid #017440"></div>
<div class="a" style="left:744px;top:384px;width:7px;height:7px;background:#017440;border:1px solid #fff"></div>
<div class="a" style="left:187px;top:270px;width:394px;height:332px;background:#f0f0f0;border:1px solid #1883d7;box-shadow:0 3px 15px rgba(0,0,0,0.38)"></div>
<div class="a" style="left:188px;top:271px;width:392px;height:30px;background:#fff"></div>
<span class="t" style="left:196.40px;top:279px;line-height:14px;font-size:11.5px;color:#000;letter-spacing:0.238px;">Проверка вводимых значений</span>
<span class="t" style="left:509.30px;top:278px;line-height:16px;font-size:12.5px;color:#000;letter-spacing:0.000px;-webkit-text-stroke:0">?</span>
<svg style="left:552px;top:280px" width="11" height="11" viewBox="0 0 11 11"><path d="M0.5 0.5L10 10.5M10 0.5L0.5 10.5" stroke="#000" stroke-width="1.1" fill="none"/></svg>
<div class="a" style="left:275px;top:310px;width:121px;height:20px;background:#f0f0f0;border:1px solid #d9d9d9;border-bottom:0"></div>
<div class="a" style="left:395px;top:310px;width:142px;height:20px;background:#f0f0f0;border:1px solid #d9d9d9;border-bottom:0"></div>
<div class="a" style="left:194px;top:329px;width:378px;height:233px;background:#fff;border:1px solid #d9d9d9"></div>
<div class="a" style="left:193px;top:308px;width:82px;height:23px;background:#fff;border:1px solid #d9d9d9;border-bottom:0"></div>
<span class="t" style="left:203.30px;top:313px;line-height:14px;font-size:11px;color:#000;letter-spacing:0.294px;">Параметры</span>
<span class="t" style="left:282.00px;top:313px;line-height:14px;font-size:11px;color:#000;letter-spacing:0.247px;">Подсказка по вводу</span>
<span class="t" style="left:404.40px;top:313px;line-height:14px;font-size:11px;color:#000;letter-spacing:0.397px;">Сообщение об ошибке</span>
<div class="a" style="left:306px;top:345px;width:259px;height:1px;background:#dcdcdc"></div>
<span class="t" style="left:203.30px;top:339px;line-height:14px;font-size:11px;color:#000;letter-spacing:0.400px;">Условие проверки</span>
<div class="a" style="left:207px;top:353px;width:145px;height:48px;border:4px solid #fddc7e"></div>
<span class="t" style="left:212.30px;top:359px;line-height:14px;font-size:11px;color:#000;letter-spacing:0.015px;"><u>Т</u>ип данных:</span>
<div class="a" style="left:212px;top:375px;width:133px;height:22px;background:#fff;border:1px solid #9a9a9a"></div>
<div class="a" style="left:327px;top:376px;width:17px;height:20px;background:#e4e4e4;border:1px solid #adadad"></div>
<svg style="left:330px;top:383px" width="10" height="6" viewBox="0 0 10 6"><path d="M0.5 0.5L5 5L9.5 0.5" stroke="#444" stroke-width="1.1" fill="none"/></svg>
<span class="t" style="left:216.30px;top:379px;line-height:14px;font-size:11px;color:#000;letter-spacing:0.400px;">Список</span>
<div class="a" style="left:349px;top:390px;width:23px;height:24px;border:4px solid #fddc7e"></div>
<div class="a" style="left:354px;top:376px;width:13px;height:13px;background:#fff;border:1px solid #333"></div><svg style="left:356px;top:379px" width="10" height="8" viewBox="0 0 10 8"><path d="M0.7 3.8L3.6 6.8L9.3 0.8" stroke="#444" stroke-width="1.1" fill="none"/></svg>
<div class="a" style="left:354px;top:395px;width:13px;height:13px;background:#fff;border:1px solid #333"></div><svg style="left:356px;top:398px" width="10" height="8" viewBox="0 0 10 8"><path d="M0.7 3.8L3.6 6.8L9.3 0.8" stroke="#444" stroke-width="1.1" fill="none"/></svg>
<span class="t" style="left:371.40px;top:376px;line-height:14px;font-size:11px;color:#000;letter-spacing:0.416px;">Игнорировать пустые <u>я</u>чейки</span>
<span class="t" style="left:371.40px;top:395px;line-height:14px;font-size:11px;color:#000;letter-spacing:0.326px;"><u>С</u>писок допустимых значений</span>
<span class="t" style="left:212.30px;top:400px;line-height:14px;font-size:11px;color:#7a9a86;letter-spacing:0.306px;">Значение:</span>
<div class="a" style="left:212px;top:416px;width:133px;height:22px;background:#efefef;border:1px solid #c4c4c4"></div>
<div class="a" style="left:327px;top:417px;width:17px;height:20px;background:#e1e1e1;border:1px solid #bcbcbc"></div>
<svg style="left:330px;top:423px" width="10" height="6" viewBox="0 0 10 6"><path d="M0.5 0.5L5 5L9.5 0.5" stroke="#555" stroke-width="1.1" fill="none"/></svg>
<span class="t" style="left:216.60px;top:420px;line-height:14px;font-size:11px;color:#8a8a8a;letter-spacing:0.138px;">между</span>
<div class="a" style="left:207px;top:438px;width:339px;height:46px;border:4px solid #fddc7e"></div>
<span class="t" style="left:212.50px;top:441px;line-height:14px;font-size:11px;color:#000;letter-spacing:0.513px;"><u>И</u>сточник:</span>
<div class="a" style="left:212px;top:457px;width:322px;height:20px;background:#fff;border:1px solid #9a9a9a"></div>
<div class="a" style="left:513px;top:458px;width:20px;height:18px;background:#f0f0f0;border:1px solid #adadad"></div>
<svg style="left:518px;top:461px" width="10" height="12" viewBox="0 0 10 12"><path d="M5 0.5L9 5H6.2V8.5H3.8V5H1Z" fill="#000"/><rect x="0.5" y="9.8" width="9" height="1.4" fill="#000"/></svg>
<span class="t" style="left:217.00px;top:461px;line-height:14px;font-size:11px;color:#000;letter-spacing:0.217px;">=ДВССЫЛ(&quot;Источник[#Заголовки]&quot;)</span>
<div class="a" style="left:203px;top:525px;width:13px;height:13px;background:#fff;border:1px solid #cccccc"></div>
<span class="t" style="left:220.40px;top:525px;line-height:14px;font-size:11px;color:#779a8a;letter-spacing:0.297px;">Распространить изменения на другие ячейки с тем же</span>
<span class="t" style="left:220.40px;top:538px;line-height:14px;font-size:11px;color:#779a8a;letter-spacing:0.057px;">условием</span>
<div class="a" style="left:194px;top:571px;width:88px;height:22px;background:#e1e1e1;border:1px solid #adadad"></div>
<div class="a" style="left:415px;top:571px;width:74px;height:22px;background:#e1e1e1;border:2px solid #0078d7"></div>
<div class="a" style="left:499px;top:571px;width:74px;height:22px;background:#e1e1e1;border:1px solid #adadad"></div>
<span class="t" style="left:203.00px;top:575px;line-height:14px;font-size:11px;color:#000;letter-spacing:0.100px;">О<u>ч</u>истить все</span>
<span class="t" style="left:443.90px;top:575px;line-height:14px;font-size:11px;color:#000;letter-spacing:0.000px;">OK</span>
<span class="t" style="left:515.30px;top:575px;line-height:14px;font-size:11px;color:#000;letter-spacing:0.180px;">Отмена</span>
</body></html>
